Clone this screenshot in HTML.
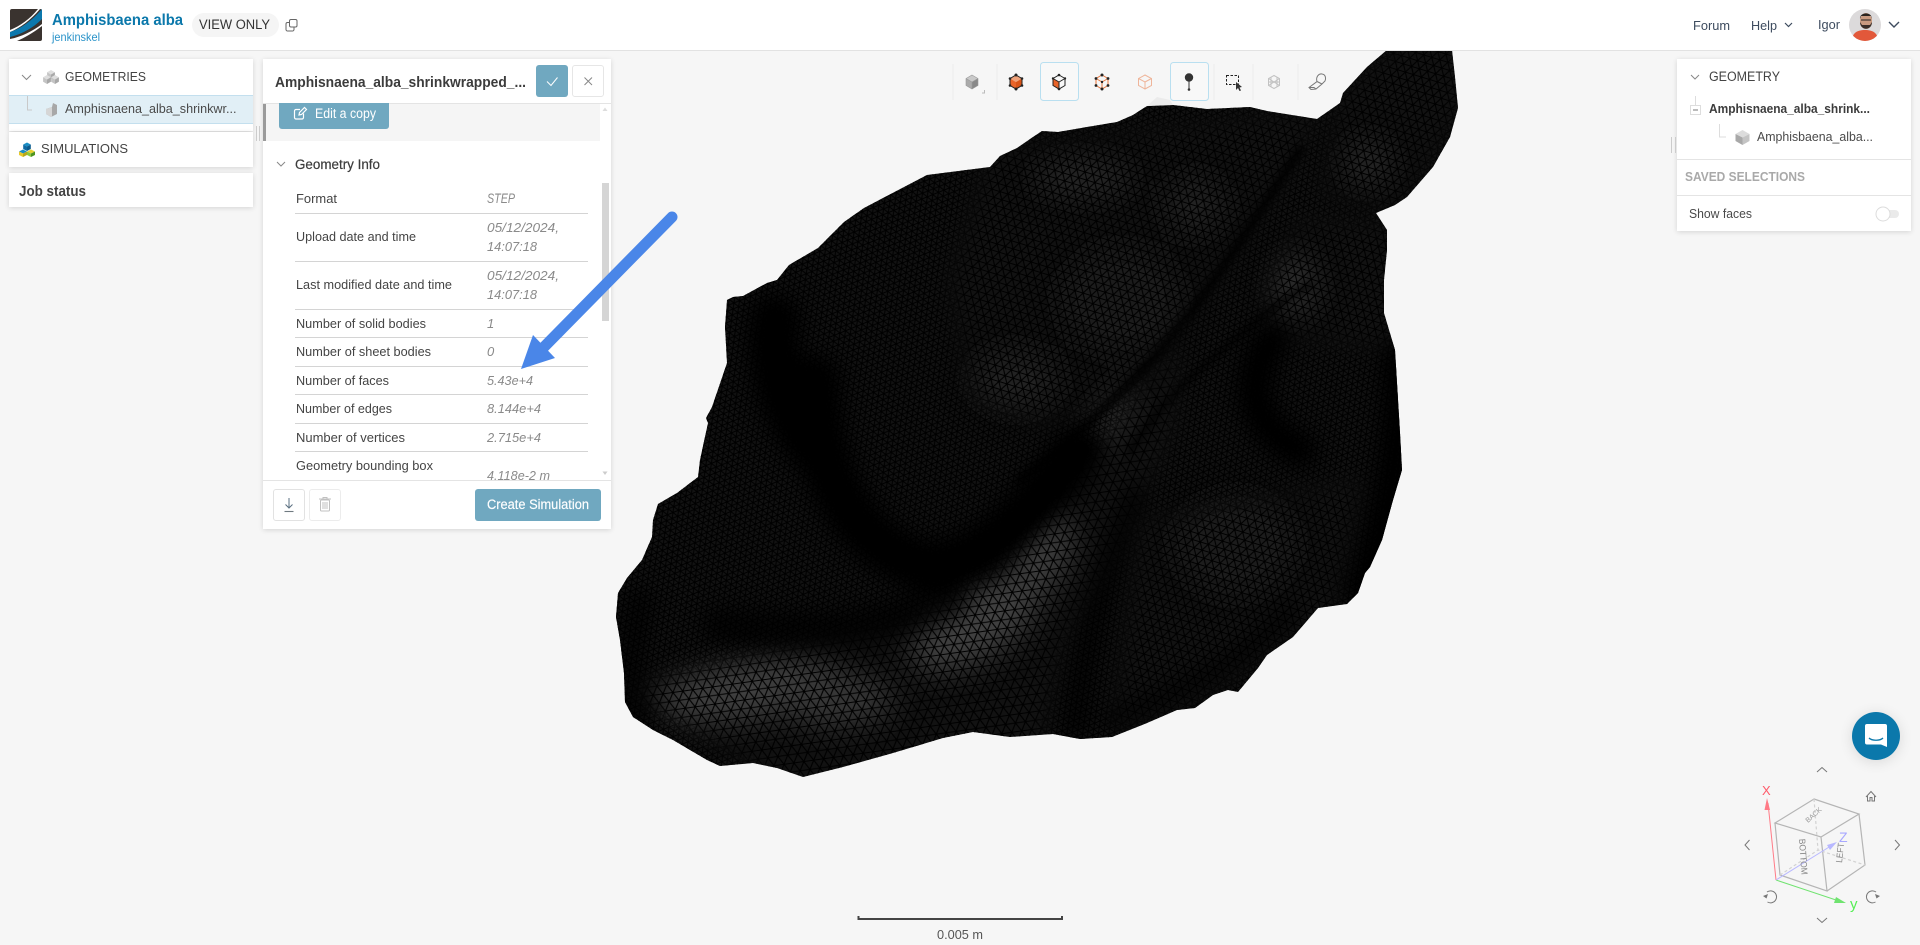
<!DOCTYPE html>
<html lang="en">
<head>
<meta charset="utf-8">
<title>Amphisbaena alba</title>
<style>
html,body{margin:0;padding:0;width:1920px;height:945px;overflow:hidden;background:#f6f6f6;font-family:"Liberation Sans",sans-serif}
.abs{position:absolute}
svg.layer{position:absolute;left:0;top:0;width:1920px;height:945px}
.panel{position:absolute;background:#fff;box-shadow:0 1px 5px rgba(0,0,0,.14)}
text{font-family:"Liberation Sans",sans-serif;font-size:13px;fill:#3a3a3a;white-space:pre}
.lab{fill:#444}
.val{fill:#8a8a8a;font-style:italic}
.b{font-weight:bold}
.w{fill:#fff}
</style>
</head>
<body>

<!-- viewer mesh -->
<svg class="layer" viewBox="0 0 1920 945">
<defs>
<clipPath id="blob"><polygon points="1000,156 1017,148 1033,137 1042,131 1058,132 1087,127 1117,122 1133,115 1147,106 1173,105 1207,109 1250,107 1267,111 1317,119 1340,103 1343,93 1367,67 1387,50 1452,50 1455,77 1458,108 1450,137 1433,167 1407,197 1395,205 1376,213 1387,230 1387,250 1384,280 1384,313 1395,350 1397,383 1400,433 1402,470 1393,500 1382,540 1370,567 1365,573 1358,593 1347,604 1318,608 1293,637 1267,655 1258,668 1238,692 1228,690 1213,695 1195,708 1177,710 1147,723 1112,737 1080,739 1053,734 1010,737 973,732 943,738 893,753 843,767 803,777 777,768 753,763 720,766 707,760 673,740 653,730 633,717 625,702 624,673 620,640 616,617 618,593 627,578 642,560 652,537 653,520 658,504 677,493 698,477 700,460 708,423 706,418 712,407 727,363 725,327 727,300 733,297 743,296 767,283 777,280 789,265 818,248 844,222 864,208 927,175 990,167"/></clipPath>
<filter id="bl" x="-60%" y="-60%" width="220%" height="220%"><feGaussianBlur stdDeviation="15"/></filter>
<filter id="bl2" x="-60%" y="-60%" width="220%" height="220%"><feGaussianBlur stdDeviation="10"/></filter>
<filter id="bl3" x="-60%" y="-60%" width="220%" height="220%"><feGaussianBlur stdDeviation="3.5"/></filter>
<filter id="bm" filterUnits="userSpaceOnUse" x="550" y="0" width="1000" height="850"><feGaussianBlur stdDeviation="9"/></filter>
<pattern id="coarse" width="10" height="17.32" patternUnits="userSpaceOnUse" patternTransform="rotate(-8)">
<path d="M0 0H10M0 8.66H10M0 17.32H10M0 0L5 8.66L0 17.32M10 0L5 8.66L10 17.32" fill="none" stroke="#000" stroke-width="1.1"/>
</pattern>
<pattern id="med" width="8.4" height="14.55" patternUnits="userSpaceOnUse" patternTransform="rotate(17)">
<path d="M0 0H8.4M0 7.275H8.4M0 14.55H8.4M0 0L4.2 7.275L0 14.55M8.4 0L4.2 7.275L8.4 14.55" fill="none" stroke="#000" stroke-width="1.05"/>
</pattern>
<pattern id="fine" width="6" height="10.39" patternUnits="userSpaceOnUse" patternTransform="rotate(-22)">
<path d="M0 0H6M0 5.195H6M0 10.39H6M0 0L3 5.195L0 10.39M6 0L3 5.195L6 10.39" fill="none" stroke="#000" stroke-width=".95"/>
</pattern>
<mask id="mFine" maskUnits="userSpaceOnUse" x="600" y="40" width="900" height="760">
<rect x="550" y="0" width="1000" height="850" fill="#fff"/>
<g fill="#000" filter="url(#bm)">
<polygon points="640,705 640,680 740,655 900,625 1000,565 1080,470 1180,340 1175,425 1115,560 1065,640 1040,750 800,790"/>
<polygon points="990,150 1320,110 1292,170 1215,280 1125,395 1040,425 970,400 950,280"/>
<polygon points="1262,290 1300,220 1395,225 1392,350 1312,340 1272,340"/>
<polygon points="1340,95 1400,45 1460,45 1460,110 1400,210 1320,195"/>
<polygon points="1140,520 1365,480 1335,610 1180,712 1112,730"/>
</g>
</mask>
<mask id="mCoarse" maskUnits="userSpaceOnUse" x="600" y="40" width="900" height="760">
<rect x="550" y="0" width="1000" height="850" fill="#000"/>
<polygon fill="#fff" filter="url(#bm)" points="640,705 640,680 740,655 900,625 1000,565 1080,470 1180,340 1175,425 1115,560 1065,640 1040,750 800,790"/>
</mask>
<mask id="mMed" maskUnits="userSpaceOnUse" x="600" y="40" width="900" height="760">
<rect x="550" y="0" width="1000" height="850" fill="#000"/>
<g fill="#fff" filter="url(#bm)">
<polygon points="990,150 1320,110 1292,170 1215,280 1125,395 1040,425 970,400 950,280"/>
<polygon points="1262,290 1300,220 1395,225 1392,350 1312,340 1272,340"/>
<polygon points="1340,95 1400,45 1460,45 1460,110 1400,210 1320,195"/>
<polygon points="1140,520 1365,480 1335,610 1180,712 1112,730"/>
</g>
</mask>
</defs>
<g clip-path="url(#blob)">
<rect x="600" y="40" width="900" height="760" fill="#121212"/>
<g filter="url(#bl)">
<ellipse cx="750" cy="690" rx="95" ry="30" fill="#404040" transform="rotate(-8 750 690)"/>
<ellipse cx="835" cy="700" rx="60" ry="26" fill="#383838"/>
<ellipse cx="975" cy="625" rx="72" ry="34" fill="#424242" transform="rotate(-30 975 625)"/>
<ellipse cx="1040" cy="555" rx="30" ry="48" fill="#3e3e3e" transform="rotate(25 1040 555)"/>
<ellipse cx="1083" cy="178" rx="50" ry="16" fill="#2a2a2a"/>
<ellipse cx="1195" cy="205" rx="30" ry="28" fill="#232323"/>
<ellipse cx="1120" cy="300" rx="60" ry="52" fill="#1f1f1f"/>
<ellipse cx="1015" cy="380" rx="44" ry="30" fill="#222"/>
<ellipse cx="1368" cy="163" rx="22" ry="22" fill="#2c2c2c"/>
<ellipse cx="1295" cy="285" rx="20" ry="30" fill="#303030"/>
<ellipse cx="1235" cy="545" rx="60" ry="50" fill="#1e1e1e"/>
<ellipse cx="1105" cy="425" rx="13" ry="44" fill="#343434" transform="rotate(35 1105 425)"/>
</g>
<g filter="url(#bl2)" fill="none" stroke="#000" stroke-linecap="round">
<path d="M775 320C770 380 790 420 815 450" stroke-width="50"/>
<path d="M815 380C815 470 850 540 920 565C985 570 1030 510 1080 450" stroke-width="50"/>
<path d="M720 625C800 635 880 630 950 600" stroke-width="36" opacity=".7"/>
<path d="M1135 495C1110 560 1080 650 1075 735" stroke-width="20" opacity=".8"/>
<path d="M1272 340C1240 385 1255 430 1300 450" stroke-width="34"/>
<path d="M1398 360C1402 430 1395 500 1362 590" stroke-width="32"/>
<path d="M1290 610C1240 665 1180 690 1110 720" stroke-width="16" opacity=".7"/>
<path d="M640 600C630 650 625 690 640 720" stroke-width="24" opacity=".7"/>
</g>
<g filter="url(#bl3)" fill="none" stroke="#000" stroke-linecap="round">
<path d="M1300 150C1260 210 1215 285 1165 345C1130 385 1075 440 1020 480" stroke-width="9" opacity=".85"/>
<path d="M1310 285C1280 300 1245 330 1205 365C1180 385 1150 420 1130 450" stroke-width="7" opacity=".7"/>
</g>
<rect x="600" y="40" width="900" height="760" fill="url(#fine)" mask="url(#mFine)"/>
<rect x="600" y="40" width="900" height="760" fill="url(#coarse)" mask="url(#mCoarse)"/>
<rect x="600" y="40" width="900" height="760" fill="url(#med)" mask="url(#mMed)"/>
</g>
<polygon points="1147,106 1157,97 1170,100 1173,105" fill="#ebebeb"/>
</svg>

<!-- header -->
<div class="abs" style="left:0;top:0;width:1920px;height:50px;background:#fff;border-bottom:1px solid #e2e2e2"></div>

<!-- left panels -->
<div class="panel" style="left:9px;top:59px;width:244px;height:72px"></div>
<div class="abs" style="left:9px;top:95px;width:244px;height:27px;background:#e1eff6;border-top:1px solid #c3dfee;border-bottom:1px solid #c3dfee"></div>
<div class="panel" style="left:9px;top:132px;width:244px;height:35px"></div>
<div class="panel" style="left:9px;top:173px;width:244px;height:34px"></div>

<!-- geometry panel -->
<div class="panel" style="left:263px;top:59px;width:348px;height:470px"></div>
<div class="abs" style="left:263px;top:103px;width:337px;height:38px;background:#f5f5f5"></div>
<div class="abs" style="left:263px;top:103px;width:3px;height:38px;background:#9a9a9a"></div>
<div class="abs" style="left:263px;top:103px;width:348px;height:1px;background:#e4e4e4"></div>
<div class="abs" style="left:279px;top:103px;width:110px;height:26px;background:#70a8c0;border-radius:0 0 3px 3px"></div>
<div class="abs" style="left:602px;top:183px;width:7px;height:138px;background:#d5d5d5"></div>
<div class="abs" style="left:263px;top:480px;width:348px;height:1px;background:#e4e4e4"></div>
<div class="abs" style="left:536px;top:65px;width:32px;height:32px;background:#70a8c0;border-radius:3px"></div>
<div class="abs" style="left:572px;top:65px;width:30px;height:30px;background:#fff;border:1px solid #e6e6e6;border-radius:3px"></div>
<div class="abs" style="left:273px;top:489px;width:30px;height:30px;border:1px solid #e2e2e2;border-radius:3px;background:#fff"></div>
<div class="abs" style="left:309px;top:489px;width:30px;height:30px;border:1px solid #ececec;border-radius:3px;background:#fff"></div>
<div class="abs" style="left:475px;top:489px;width:126px;height:32px;background:#70a8c0;border-radius:3px"></div>

<!-- right panel -->
<div class="panel" style="left:1677px;top:59px;width:234px;height:172px"></div>
<div class="abs" style="left:1677px;top:159px;width:234px;height:1px;background:#e4e4e4"></div>
<div class="abs" style="left:1677px;top:195px;width:234px;height:1px;background:#e4e4e4"></div>

<!-- chat button -->
<div class="abs" style="left:1852px;top:712px;width:48px;height:48px;border-radius:50%;background:#0b78ab;box-shadow:0 2px 14px rgba(0,0,0,.12)"></div>

<svg class="layer" viewBox="0 0 1920 945">
<defs>
<g id="gc"><polygon points="0,-4.5 3.9,-2.2 0,0 -3.900,-2.200" fill="#dedede"/><polygon points="-3.900,-2.200 0,0 0,4.500 -3.900,2.200" fill="#c4c4c4"/><polygon points="3.900,-2.200 0,0 0,4.500 3.900,2.200" fill="#a8a8a8"/></g>
</defs>

<!-- logo -->
<rect x="10" y="9" width="32" height="32" rx="2" fill="#3a332f"/>
<path d="M10 32C20 29 32 21 42 9V19C33 28 22 34 10 37Z" fill="#0c78ad"/>
<path d="M10 30C20 26 30 19 38 9H40C31 20 20 28 10 32ZM10 39C21 37 33 31 42 24V26C33 33 24 38 17 41H10Z" fill="#fff"/>

<!-- header text -->
<text x="52" y="25" textLength="131" lengthAdjust="spacingAndGlyphs" class="b" style="font-size:15.5px;fill:#0b78ab">Amphisbaena alba</text>
<text x="52" y="41" textLength="48" lengthAdjust="spacingAndGlyphs" style="font-size:12px;fill:#2a93c9">jenkinskel</text>
<rect x="192" y="13" width="87" height="24" rx="12" fill="#f5f5f5"/>
<text x="199" y="29" textLength="71" lengthAdjust="spacingAndGlyphs" style="font-size:13.5px;fill:#333">VIEW ONLY</text>
<g fill="none" stroke="#666" stroke-width="1">
<rect x="289.500" y="19.500" width="7.500" height="7.500" rx="1.500"/>
<path d="M289.500 22.500H287.500A1.500 1.500 0 0 0 286 24V29.500A1.500 1.500 0 0 0 287.500 31H292.500A1.500 1.500 0 0 0 294 29.500V27.500"/>
</g>
<text x="1693" y="30" textLength="37" lengthAdjust="spacingAndGlyphs" style="fill:#3d4b5e">Forum</text>
<text x="1751" y="30" textLength="26" lengthAdjust="spacingAndGlyphs" style="fill:#3d4b5e">Help</text>
<path d="M1785 23L1788.500 26.500L1792 23" fill="none" stroke="#3d4b5e" stroke-width="1.200"/>
<text x="1818" y="29" textLength="22" lengthAdjust="spacingAndGlyphs" style="fill:#3d4b5e">Igor</text>
<clipPath id="av"><circle cx="1865" cy="25" r="16"/></clipPath>
<g clip-path="url(#av)">
<rect x="1849" y="9" width="32" height="32" fill="#dcdadb"/>
<path d="M1852 41C1852 33 1857 30 1865 30C1873 30 1878 33 1878 41Z" fill="#e2583a"/>
<ellipse cx="1866" cy="21" rx="6" ry="8" fill="#c99a80"/>
<path d="M1860 19C1859 12 1872 11 1872 19L1871 16H1861Z" fill="#2a2420"/>
<path d="M1860 22C1860 31 1872 31 1872 22L1870 25H1862Z" fill="#3a2e28"/>
<path d="M1861 20H1871" stroke="#222" stroke-width="1"/>
</g>
<path d="M1889 22L1894 27L1899 22" fill="none" stroke="#3d4b5e" stroke-width="1.400"/>

<!-- left tree -->
<path d="M22 75L26.500 79.500L31 75" fill="none" stroke="#888" stroke-width="1"/>
<use href="#gc" x="51" y="74.500"/><use href="#gc" x="47" y="79.500"/><use href="#gc" x="55" y="79.500"/>
<text x="65" y="81" textLength="81" lengthAdjust="spacingAndGlyphs" style="fill:#444">GEOMETRIES</text>
<path d="M27.500 96V110H32" fill="none" stroke="#c9c9c9"/>
<g transform="translate(51 110)"><polygon points="2,-7 6,-5 6,4 0,7 -5,4 -5,-1 1,-3" fill="#a8a8a8"/><polygon points="-5,-1 1,-3 1,7 0,7 -5,4" fill="#d6d6d6"/></g>
<text x="65" y="113" textLength="171.500" lengthAdjust="spacingAndGlyphs" style="fill:#4a4a4a">Amphisnaena_alba_shrinkwr...</text>
<g transform="translate(27 142.500)">
<polygon points="0,0 3.800,2 0,4 -3.800,2" fill="#1a8ec5"/><polygon points="-3.800,2 0,4 0,8.500 -3.800,6.500" fill="#0e6aa3"/><polygon points="3.800,2 0,4 0,8.500 3.800,6.500" fill="#0b5a8c"/>
<polygon points="-4,7 0,9 -4,11 -8,9" fill="#1a8ec5"/><polygon points="-8,9 -4,11 -4,14.500 -8,12.500" fill="#e8c82a"/><polygon points="0,9 -4,11 -4,14.500 0,12.500" fill="#b8a818"/>
<polygon points="4,7 8,9 4,11 0,9" fill="#e8d030"/><polygon points="0,9 4,11 4,14.500 0,12.500" fill="#8cc83c"/><polygon points="8,9 4,11 4,14.500 8,12.500" fill="#4f9420"/>
</g>
<text x="41" y="153" textLength="87" lengthAdjust="spacingAndGlyphs" style="fill:#444">SIMULATIONS</text>
<text x="19" y="196" textLength="67" lengthAdjust="spacingAndGlyphs" class="b" style="font-size:14.500px;fill:#444">Job status</text>
<path d="M256.500 126V141M259.500 126V141" stroke="#ccc" stroke-width="1"/>

<!-- geometry panel content -->
<text x="275" y="87" textLength="251" lengthAdjust="spacingAndGlyphs" class="b" style="font-size:14.500px;fill:#3c3c3c">Amphisnaena_alba_shrinkwrapped_...</text>
<path d="M547 81.500L551 85.500L557.500 77.500" fill="none" stroke="#fff" stroke-width="1"/>
<path d="M584.500 77.500L592 85M592 77.500L584.500 85" stroke="#888" stroke-width="1"/>
<g fill="none" stroke="#fff" stroke-width="1.200">
<path d="M303.500 113.500V117.500A1.500 1.500 0 0 1 302 119H296A1.500 1.500 0 0 1 294.500 117.500V111A1.500 1.500 0 0 1 296 109.500H300"/>
<path d="M299 115L299.500 112.500L304.500 107.500L306.500 109.500L301.500 114.500Z"/>
</g>
<text x="315" y="118" textLength="61" lengthAdjust="spacingAndGlyphs" class="w" style="font-size:13.500px">Edit a copy</text>
<path d="M605 107.500L607.500 111H602.500Z" fill="#ddd"/>
<path d="M602.500 471.500H607.500L605 475Z" fill="#ccc"/>
<path d="M277 162L281 166L285 162" fill="none" stroke="#888" stroke-width="1"/>
<text x="295" y="169" textLength="85" lengthAdjust="spacingAndGlyphs" style="font-size:13.500px;fill:#3c3c3c;stroke:#3c3c3c;stroke-width:.2">Geometry Info</text>
<g stroke="#d4d4d4" stroke-width="1">
<path d="M295 213.500H588M295 261.500H588M295 309.500H588M295 337.500H588M295 366.500H588M295 394.500H588M295 423.500H588M295 451.500H588"/>
</g>
<text class="lab" x="296" y="203" textLength="41" lengthAdjust="spacingAndGlyphs">Format</text>
<text class="lab" x="296" y="241" textLength="120" lengthAdjust="spacingAndGlyphs">Upload date and time</text>
<text class="lab" x="296" y="289" textLength="156" lengthAdjust="spacingAndGlyphs">Last modified date and time</text>
<text class="lab" x="296" y="328" textLength="130" lengthAdjust="spacingAndGlyphs">Number of solid bodies</text>
<text class="lab" x="296" y="356" textLength="135" lengthAdjust="spacingAndGlyphs">Number of sheet bodies</text>
<text class="lab" x="296" y="385" textLength="93" lengthAdjust="spacingAndGlyphs">Number of faces</text>
<text class="lab" x="296" y="413" textLength="96" lengthAdjust="spacingAndGlyphs">Number of edges</text>
<text class="lab" x="296" y="442" textLength="109" lengthAdjust="spacingAndGlyphs">Number of vertices</text>
<text class="lab" x="296" y="470" textLength="137" lengthAdjust="spacingAndGlyphs">Geometry bounding box</text>
<text class="val" x="487" y="203" textLength="28" lengthAdjust="spacingAndGlyphs" style="font-size:14px">STEP</text>
<text class="val" x="487" y="232" textLength="72" lengthAdjust="spacingAndGlyphs">05/12/2024,</text>
<text class="val" x="487" y="251" textLength="50" lengthAdjust="spacingAndGlyphs">14:07:18</text>
<text class="val" x="487" y="280" textLength="72" lengthAdjust="spacingAndGlyphs">05/12/2024,</text>
<text class="val" x="487" y="299" textLength="50" lengthAdjust="spacingAndGlyphs">14:07:18</text>
<text class="val" x="487" y="328">1</text>
<text class="val" x="487" y="356">0</text>
<text class="val" x="487" y="385" textLength="46" lengthAdjust="spacingAndGlyphs">5.43e+4</text>
<text class="val" x="487" y="413" textLength="54" lengthAdjust="spacingAndGlyphs">8.144e+4</text>
<text class="val" x="487" y="442" textLength="54" lengthAdjust="spacingAndGlyphs">2.715e+4</text>
<clipPath id="cl"><rect x="480" y="455" width="120" height="25"/></clipPath>
<text class="val" x="487" y="480" textLength="63" lengthAdjust="spacingAndGlyphs" clip-path="url(#cl)">4.118e-2 m</text>
<path d="M289 498V508M285.500 504.500L289 508L292.500 504.500" fill="none" stroke="#5a6f80" stroke-width="1"/>
<path d="M284.500 511.500H293.500" stroke="#6f7a80" stroke-width="1.100"/>
<g fill="none" stroke="#c0c0c0" stroke-width="1">
<rect x="320.500" y="500" width="9" height="11" rx="1"/>
<path d="M319 499H331M323 499V497.500H327V499M323 502V509M325 502V509M327 502V509"/>
</g>
<text x="487" y="509" textLength="102" lengthAdjust="spacingAndGlyphs" class="w" style="font-size:13.500px;stroke:#fff;stroke-width:.15">Create Simulation</text>

<!-- toolbar -->
<g stroke="#ececec" stroke-width="1"><path d="M953 64V100M997 64V100M1214 64V100M1253 64V100M1298 64V100"/></g>
<rect x="1040.500" y="62.500" width="38" height="38" rx="3" fill="#f8f8f8" stroke="#b9dff0"/>
<rect x="1170.500" y="62.500" width="38" height="38" rx="3" fill="#f8f8f8" stroke="#b9dff0"/>
<g transform="translate(972 82)"><polygon points="0,-7 6,-3.500 0,0 -6,-3.500" fill="#c9c9c9"/><polygon points="-6,-3.500 0,0 0,7 -6,3.500" fill="#aaa"/><polygon points="6,-3.500 0,0 0,7 6,3.500" fill="#888"/><path d="M0 -7L6 -3.500V3.500L0 7L-6 3.500V-3.500Z M0 0L6 -3.500M0 0L-6 -3.500M0 0V7" fill="none" stroke="#999" stroke-width=".6"/></g>
<path d="M982 93H984.500V90" fill="none" stroke="#bbb"/>
<g transform="translate(1016 82)"><polygon points="0,-7 6,-3.500 0,0 -6,-3.500" fill="#f0a27a"/><polygon points="-6,-3.500 0,0 0,7 -6,3.500" fill="#e8642a"/><polygon points="6,-3.500 0,0 0,7 6,3.500" fill="#d85418"/><path d="M0 -7L6 -3.500V3.500L0 7L-6 3.500V-3.500Z" fill="none" stroke="#222" stroke-width="1"/><g fill="#222"><circle cx="0" cy="-7" r="1.500"/><circle cx="6" cy="-3.500" r="1.300"/><circle cx="-6" cy="-3.500" r="1.300"/><circle cx="6" cy="3.500" r="1.300"/><circle cx="-6" cy="3.500" r="1.300"/><circle cx="0" cy="7" r="1.500"/></g></g>
<g transform="translate(1059 82)"><polygon points="-6,-3.500 0,0 0,7 -6,3.500" fill="#e8642a"/><path d="M0 -7L6 -3.500V3.500L0 7L-6 3.500V-3.500ZM0 0L6 -3.500M0 0L-6 -3.500M0 0V7" fill="none" stroke="#222" stroke-width="1"/><g fill="#222"><circle cx="0" cy="-7" r="1.300"/><circle cx="0" cy="7" r="1.300"/><circle cx="-6" cy="-3.500" r="1.200"/><circle cx="6" cy="-3.500" r="1.200"/></g></g>
<g transform="translate(1102 82)"><path d="M0 -7L6 -3.500V3.500L0 7L-6 3.500V-3.500ZM0 0L6 -3.500M0 0L-6 -3.500M0 0V7" fill="none" stroke="#e8743a" stroke-width="1"/><g fill="#222"><circle cx="0" cy="-7" r="1.500"/><circle cx="6" cy="-3.500" r="1.400"/><circle cx="-6" cy="-3.500" r="1.400"/><circle cx="6" cy="3.500" r="1.400"/><circle cx="-6" cy="3.500" r="1.400"/><circle cx="0" cy="7" r="1.500"/><circle cx="0" cy="0" r="1.200"/></g></g>
<g transform="translate(1145 82)"><path d="M0 -7L6.500 -3.500V3.500L0 7L-6.500 3.500V-3.500ZM0 0L6.500 -3.500M0 0L-6.500 -3.500M0 0V7" fill="none" stroke="#efb59a" stroke-width="1"/></g>
<circle cx="1189" cy="77.500" r="4.200" fill="#333"/><path d="M1189 80V89" stroke="#333" stroke-width="1"/><circle cx="1189" cy="89.500" r="1.300" fill="#333"/>
<rect x="1226.500" y="75.500" width="12" height="9" fill="none" stroke="#222" stroke-dasharray="2.500 1.500"/>
<path d="M1236 82L1236 90L1238 88L1239.500 91L1241 90.500L1239.500 87.500L1242 87Z" fill="#333"/>
<g transform="translate(1274 82)" fill="none" stroke="#c2c2c2" stroke-width="1"><path d="M0 -6.500L5.500 -3.500V3.500L0 6.500L-5.500 3.500V-3.500ZM-3 -5V5M3 -5V5M-5.500 0H5.500M-5.500 -3.500L5.500 3.500M5.500 -3.500L-5.500 3.500"/></g>
<g fill="none" stroke="#777" stroke-width="1"><path d="M1309 87.500L1317 81.500C1315.500 76.500 1319 73.500 1322 74C1326 74.500 1326 79 1325 81L1322 84L1316 89L1311 89.500ZM1317 81.500L1322 84M1309 87.500L1314 87.500L1316 89"/></g>

<!-- right panel content -->
<path d="M1691 75L1695 79L1699 75" fill="none" stroke="#888" stroke-width="1"/>
<text x="1709" y="81" textLength="71" lengthAdjust="spacingAndGlyphs" style="font-size:13.500px;fill:#444">GEOMETRY</text>
<path d="M1695.500 96V105" stroke="#ddd"/>
<rect x="1690.500" y="105.500" width="10" height="9" fill="#fff" stroke="#ddd"/>
<path d="M1693 110H1698" stroke="#777"/>
<text x="1709" y="113" textLength="161" lengthAdjust="spacingAndGlyphs" class="b" style="fill:#3c3c3c">Amphisnaena_alba_shrink...</text>
<path d="M1719.500 124V137H1726" fill="none" stroke="#ddd"/>
<g transform="translate(1742.500 137.500)"><polygon points="0,-7.500 7,-3.500 0,0 -7,-3.500" fill="#dcdcdc"/><polygon points="-7,-3.500 0,0 0,7.500 -7,3.500" fill="#a8a8a8"/><polygon points="7,-3.500 0,0 0,7.500 7,3.500" fill="#c4c4c4"/></g>
<text x="1757" y="141" textLength="116" lengthAdjust="spacingAndGlyphs" style="fill:#4a4a4a">Amphisbaena_alba...</text>
<text x="1685" y="181" textLength="120" lengthAdjust="spacingAndGlyphs" class="b" style="fill:#a9a9a9">SAVED SELECTIONS</text>
<text x="1689" y="218" textLength="63" lengthAdjust="spacingAndGlyphs" style="fill:#4a4a4a">Show faces</text>
<rect x="1877" y="210" width="22" height="8" rx="4" fill="#eaeaea"/>
<circle cx="1883" cy="214" r="7" fill="#fff" stroke="#dcdcdc"/>
<path d="M1671.500 137V153M1675.500 137V153" stroke="#ccc"/>

<!-- arrow -->
<path d="M672 217L544 347" stroke="#4a86e8" stroke-width="11" stroke-linecap="round" fill="none"/>
<polygon points="521,369 533,335 555,358" fill="#4a86e8"/>

<!-- chat icon -->
<path d="M1867 724H1885A2 2 0 0 1 1887 726V747L1881 744.500H1867A2 2 0 0 1 1865 742.500V726A2 2 0 0 1 1867 724Z" fill="#fff"/>
<path d="M1869 738C1872 741 1880 741 1883 738" fill="none" stroke="#0b78ab" stroke-width="1.300"/>

<!-- gizmo -->
<g fill="none" stroke="#777" stroke-width="1">
<path d="M1817 772L1822 767.500L1827 772M1817 918L1822 922.500L1827 918M1749.500 840L1745 845L1749.500 850M1895 840L1899.500 845L1895 850"/>
<path d="M1866 797L1871 791.500L1876 797M1867.500 796V801H1870V797.500H1872V801H1874.500V796"/>
<path d="M1767 892A6 6 0 1 1 1767.500 902M1876 892A6 6 0 1 0 1875.500 902"/>
</g>
<path d="M1763 896L1768 894L1766.500 898.500ZM1880 896L1875 894L1876.500 898.500Z" fill="#777"/>
<g fill="none" stroke="#b5b5b5" stroke-width="1.200">
<path d="M1814 799L1859 814L1821 837L1775 823ZM1775 823L1780 875L1827 891L1821 837M1859 814L1865 865L1827 891"/>
<path d="M1814 799L1818 850M1780 875L1818 850L1865 865" stroke-dasharray="3 2.500" stroke="#d2d2d2"/>
</g>
<path d="M1776 880L1768 803" stroke="#ff7a86" stroke-width="1"/><path d="M1767 798L1764.500 810H1770Z" fill="#ff7a86"/>
<path d="M1776 880L1842 902" stroke="#6fe36f" stroke-width="1"/><path d="M1846 903L1836 897L1834 903Z" fill="#6fe36f"/>
<path d="M1776 880L1834 844" stroke="#b8b8ff" stroke-width="1"/><path d="M1837 842L1827 845L1830 850Z" fill="#b8b8ff"/>
<text x="1762" y="795" style="font-size:13px;fill:#ff5a6a">X</text>
<text x="1850" y="909" style="font-size:15px;fill:#55ee55">y</text>
<text x="1839" y="842" style="font-size:14px;fill:#a8a8ff">Z</text>
<text transform="translate(1799 839) rotate(86)" textLength="36" lengthAdjust="spacingAndGlyphs" style="font-size:9px;fill:#888">BOTTOM</text>
<text transform="translate(1842 863) rotate(-84)" textLength="20" lengthAdjust="spacingAndGlyphs" style="font-size:9px;fill:#888">LEFT</text>
<text transform="translate(1808 823) rotate(-42)" textLength="19" lengthAdjust="spacingAndGlyphs" style="font-size:7px;fill:#999">BACK</text>

<!-- scale -->
<path d="M858.500 916V919H1062V916" fill="none" stroke="#444" stroke-width="2"/>
<text x="937" y="939" textLength="46" lengthAdjust="spacingAndGlyphs" style="fill:#555">0.005 m</text>
</svg>
</body>
</html>
